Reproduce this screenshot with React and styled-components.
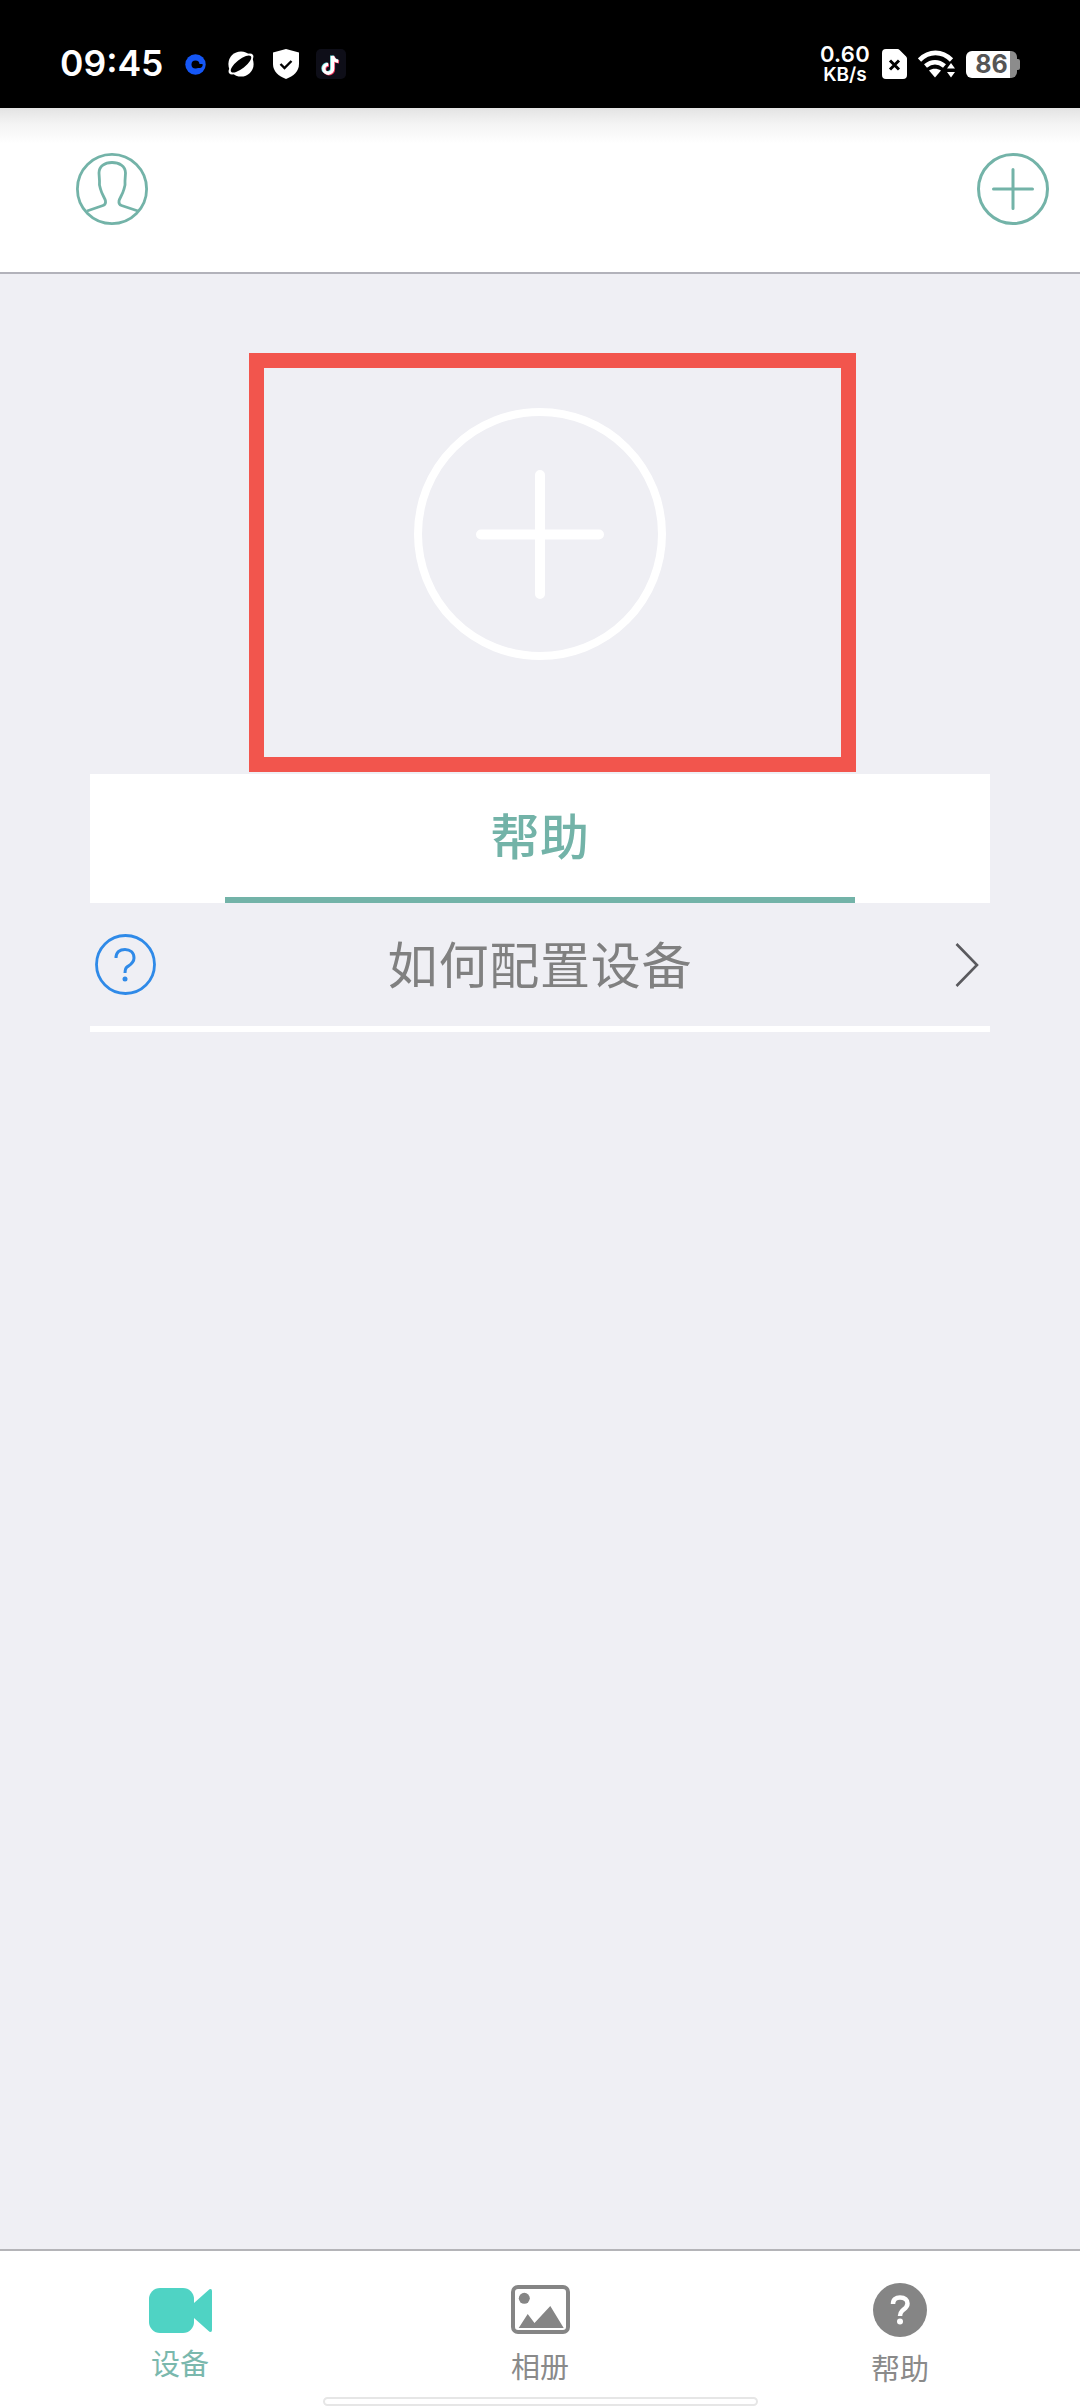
import React from 'react';
import styled, { createGlobalStyle } from 'styled-components';

const teal = '#73b3a8';
const cjk = '"Noto Sans CJK SC", "Noto Sans", sans-serif';

const GlobalStyle = createGlobalStyle`
  html, body {
    margin: 0;
    padding: 0;
    background: #efeff4;
  }
  * {
    box-sizing: border-box;
  }
`;

const Page = styled.div`
  width: 1080px;
  height: 2408px;
  display: flex;
  flex-direction: column;
  overflow: hidden;
  background: #efeff4;
  font-family: ${cjk};
`;

const StatusBar = styled.div`
  height: 108px;
  flex: none;
  display: flex;
  align-items: center;
  justify-content: space-between;
  padding: 20px 60px 0 60px;
  background: #000;
  color: #fff;
`;

const StatusGroup = styled.div`
  display: flex;
  align-items: center;
`;

const Time = styled.span`
  width: 103px;
  font: 600 35.5px/1 Inter, sans-serif;
  margin-right: 22px;
  white-space: nowrap;
`;

const StatusIcon = styled.svg`
  display: block;
  flex: none;
  margin-right: ${props => props.$gap || 0}px;
`;

const Speed = styled.div`
  display: flex;
  flex-direction: column;
  align-items: center;
  gap: 1px;
  margin-right: 12px;
  font-family: Inter, sans-serif;
  font-weight: 600;
`;

const SpeedValue = styled.span`
  font-size: 22px;
  line-height: 19px;
  letter-spacing: 0.3px;
`;

const SpeedUnit = styled.span`
  font-size: 19px;
  line-height: 19px;
`;

const Battery = styled.div`
  position: relative;
  width: 51px;
  height: 27px;
  margin-right: 3px;
  border-radius: 6px;
  display: flex;
  align-items: center;
  justify-content: center;
  background: linear-gradient(90deg, #fff 0 86%, #8c8c8c 86% 100%);
  color: #555;
  font: 700 25px/1 Inter, sans-serif;

  &::after {
    content: '';
    position: absolute;
    right: -3px;
    top: 8px;
    width: 3px;
    height: 11px;
    border-radius: 0 2px 2px 0;
    background: #8c8c8c;
  }
`;

const Header = styled.header`
  height: 166px;
  flex: none;
  display: flex;
  align-items: center;
  justify-content: space-between;
  padding: 0 31px 2px 76px;
  background: linear-gradient(180deg, #e3e3e3 0, #f4f4f4 16px, #fff 36px);
  border-bottom: 2px solid #b2b2ba;
`;

const HeaderIcon = styled.svg`
  display: block;
`;

const Main = styled.main`
  flex: 1;
  width: 900px;
  margin: 0 auto;
  padding-top: 79px;
  display: flex;
  flex-direction: column;
`;

const AddBox = styled.div`
  width: 607px;
  height: 419px;
  margin-left: 159px;
  padding: 40px 25px 0 0;
  border: 15px solid #f2554d;
  display: flex;
  justify-content: center;
  align-items: flex-start;
`;

const HelpCard = styled.div`
  height: 129px;
  margin-top: 2px;
  display: flex;
  flex-direction: column;
  background: #fff;
`;

const HelpTitle = styled.div`
  flex: 1;
  display: flex;
  align-items: center;
  justify-content: center;
  padding-bottom: 4px;
  color: ${teal};
  font-size: 49px;
  font-weight: 500;
  letter-spacing: 0.5px;
  line-height: 1;
`;

const HelpUnderline = styled.div`
  width: 630px;
  height: 6px;
  margin-left: 135px;
  background: ${teal};
`;

const HelpRow = styled.div`
  height: 123px;
  display: grid;
  grid-template-columns: 1fr auto 1fr;
  align-items: center;
  padding: 0 5px;
`;

const HelpRowText = styled.span`
  padding-bottom: 5px;
  color: #808080;
  font-size: 50px;
  letter-spacing: 0.8px;
  line-height: 1;
`;

const RowIcon = styled.svg`
  display: block;
  justify-self: ${props => props.$end ? 'end' : 'start'};
  margin-right: ${props => props.$end ? 6 : 0}px;
`;

const Divider = styled.div`
  height: 6px;
  background: #fff;
`;

const TabBar = styled.nav`
  height: 159px;
  flex: none;
  display: flex;
  flex-direction: column;
  align-items: center;
  background: #fff;
  border-top: 2px solid #b4b4b8;
`;

const Tabs = styled.div`
  width: 100%;
  height: 146px;
  display: grid;
  grid-template-columns: repeat(3, 1fr);
`;

const Tab = styled.div`
  display: flex;
  flex-direction: column;
  align-items: center;
  padding-top: ${props => props.$top}px;
`;

const TabIcon = styled.svg`
  display: block;
  flex: none;
`;

const TabLabel = styled.span`
  margin-top: ${props => props.$gap}px;
  color: ${props => props.$active ? '#7ab8ad' : '#8a8a8a'};
  font-size: 29px;
  line-height: 30px;
`;

const HomeIndicator = styled.div`
  width: 435px;
  height: 9px;
  border: 2px solid #e6e6e6;
  border-radius: 5px;
  background: #fff;
`;

const CoinIcon = () => (
  <StatusIcon $gap={20} width="21" height="21" viewBox="0 0 21 21">
    <circle cx="10.5" cy="10.5" r="10.2" fill="#1557f6" />
    <circle cx="10.5" cy="10.5" r="4" fill="#000" />
    <path d="M11 10h6.500a3 3 0 0 1-3 4H11z" fill="#000" />
  </StatusIcon>
);

const PlanetIcon = () => (
  <StatusIcon $gap={17} width="30" height="26" viewBox="0 0 30 26">
    <circle cx="15" cy="13" r="12.6" fill="#fff" />
    <ellipse cx="15" cy="13" rx="15" ry="6" transform="rotate(-38 15 13)" fill="#fff" />
    <ellipse cx="15" cy="13" rx="12.5" ry="4.6" transform="rotate(-38 15 13)" fill="#000" />
  </StatusIcon>
);

const ShieldIcon = () => (
  <StatusIcon $gap={17} width="26" height="30" viewBox="0 0 26 30">
    <path d="M13 0l13 3.500V15c0 7.500-5.500 12-13 15C5.500 27 0 22.500 0 15V3.500z" fill="#fff" />
    <path d="M7.500 15l4 4 7-7" fill="none" stroke="#000" strokeWidth="2.400" />
  </StatusIcon>
);

const TikTokIcon = () => (
  <StatusIcon width="30" height="30" viewBox="0 0 30 30">
    <rect width="30" height="30" rx="5" fill="#0e0e18" />
    <g fill="none" strokeWidth="3.400">
      <path d="M15.800 6.500v12.800a4.400 4.400 0 1 1-4.400-4.400M15.800 6.500c.5 3 2.800 5 5.700 5.200" stroke="#6fe3e6" />
      <path d="M17.400 7.700v12.800a4.400 4.400 0 1 1-4.400-4.400M17.400 7.700c.5 3 2.800 5 5.700 5.200" stroke="#f0345a" />
      <path d="M16.600 7v12.800a4.400 4.400 0 1 1-4.400-4.400M16.600 7c.5 3 2.800 5 5.700 5.200" stroke="#fff" />
    </g>
  </StatusIcon>
);

const SimIcon = () => (
  <StatusIcon $gap={11} width="25" height="30" viewBox="0 0 25 30">
    <path d="M4 0h11.500a3 3 0 0 1 2.100.9l6.500 6.500a3 3 0 0 1 .9 2.100V26a4 4 0 0 1-4 4H4a4 4 0 0 1-4-4V4a4 4 0 0 1 4-4z" fill="#fff" />
    <path d="M8 11.500l9 9M17 11.500l-9 9" stroke="#000" strokeWidth="3" />
  </StatusIcon>
);

const WifiIcon = () => (
  <StatusIcon $gap={11} width="37" height="28" viewBox="0 0 37 28">
    <g fill="none" stroke="#fff" strokeWidth="4.600">
      <path d="M1.500 10C11 .5 24 .5 33.500 10" />
      <path d="M7.500 16c6-5 13-5 19 0" />
    </g>
    <path d="M11 20.500c3.500-2.500 8-2.500 12 0l-6 7z" fill="#fff" />
    <path d="M33 13l4 5.500h-8zM33 27.500l-4-5.500h8z" fill="#fff" />
  </StatusIcon>
);

const ProfileIcon = () => (
  <HeaderIcon width="72" height="72" viewBox="0 0 72 72" fill="none" stroke={teal} strokeWidth="2.800">
    <circle cx="36" cy="36" r="34.600" />
    <path d="M11 58L27 52.500Q30 51.500 29.500 48C29 45 26 42 24.500 36C23.500 33 23 31 23.500 28L23 20C23 13 29 9.500 36 9.500C43 9.500 49.500 13 49.500 20L49 28C49.500 31 49 33 48 36C46.500 42 43.500 45 43 48Q42.500 51.500 45.500 52.500L62 58" />
  </HeaderIcon>
);

const AddIcon = () => (
  <HeaderIcon width="72" height="72" viewBox="0 0 72 72" fill="none" stroke={teal} strokeWidth="3">
    <circle cx="36" cy="36" r="34.500" />
    <path d="M16.500 36h39M36 16.500v39" strokeLinecap="round" />
  </HeaderIcon>
);

const BigAddIcon = () => (
  <svg width="252" height="252" viewBox="0 0 252 252" fill="none" stroke="#fff" style={{ display: 'block' }}>
    <circle cx="126" cy="126" r="122" strokeWidth="8" />
    <path d="M67 126.500h118M126 67v119" strokeWidth="10" strokeLinecap="round" />
  </svg>
);

const QuestionIcon = () => (
  <RowIcon width="61" height="61" viewBox="0 0 61 61" fill="none" stroke="#2f8ae8">
    <circle cx="30.500" cy="30.500" r="29" strokeWidth="2.800" />
    <path d="M21 24C21 18 25 15.500 30 15.500C35 15.500 39 18.500 39 24C39 29 35 31 32 33C30.500 34 30 36 30 39" strokeWidth="3" />
    <circle cx="30" cy="45" r="2.500" fill="#2f8ae8" stroke="none" />
  </RowIcon>
);

const ChevronIcon = () => (
  <RowIcon $end width="24" height="44" viewBox="0 0 24 44" fill="none" stroke="#5a5a5e" strokeWidth="2.600">
    <path d="M1.500 1L22 22L1.500 43" />
  </RowIcon>
);

const VideoIcon = () => (
  <TabIcon width="63" height="45" viewBox="0 0 63 45" fill="#4fd3c4">
    <rect width="45" height="45" rx="11" />
    <path d="M45 15L60.500 1.200Q63 .5 63 3V42Q63 44.500 60.500 43.800L45 30z" />
  </TabIcon>
);

const GalleryIcon = () => (
  <TabIcon width="59" height="49" viewBox="0 0 59 49" fill="#858585">
    <rect x="2" y="2" width="55" height="45" rx="5" fill="none" stroke="#858585" strokeWidth="4" />
    <circle cx="13.300" cy="13.300" r="5.500" />
    <path d="M7.700 43L16.700 29L23.500 38L39.300 21L52.700 43z" />
  </TabIcon>
);

const HelpFilledIcon = () => (
  <TabIcon width="54" height="54" viewBox="0 0 54 54">
    <circle cx="27" cy="27" r="27" fill="#858585" />
    <path d="M20 21C20 16.500 23 14.500 27 14.500C32 14.500 34.500 17 34.500 20.500C34.500 24.500 31 26 29 28C27.500 29.500 27 30.500 27 33" fill="none" stroke="#fff" strokeWidth="4.500" />
    <circle cx="27" cy="38.500" r="3" fill="#fff" />
  </TabIcon>
);

export default function App() {
  return (
    <Page>
      <GlobalStyle />
      <StatusBar>
        <StatusGroup>
          <Time>09:45</Time>
          <CoinIcon />
          <PlanetIcon />
          <ShieldIcon />
          <TikTokIcon />
        </StatusGroup>
        <StatusGroup>
          <Speed>
            <SpeedValue>0.60</SpeedValue>
            <SpeedUnit>KB/s</SpeedUnit>
          </Speed>
          <SimIcon />
          <WifiIcon />
          <Battery>86</Battery>
        </StatusGroup>
      </StatusBar>
      <Header>
        <ProfileIcon />
        <AddIcon />
      </Header>
      <Main>
        <AddBox>
          <BigAddIcon />
        </AddBox>
        <HelpCard>
          <HelpTitle>帮助</HelpTitle>
          <HelpUnderline />
        </HelpCard>
        <HelpRow>
          <QuestionIcon />
          <HelpRowText>如何配置设备</HelpRowText>
          <ChevronIcon />
        </HelpRow>
        <Divider />
      </Main>
      <TabBar>
        <Tabs>
          <Tab $top={37}>
            <VideoIcon />
            <TabLabel $active $gap={14}>设备</TabLabel>
          </Tab>
          <Tab $top={34}>
            <GalleryIcon />
            <TabLabel $gap={16}>相册</TabLabel>
          </Tab>
          <Tab $top={32}>
            <HelpFilledIcon />
            <TabLabel $gap={15}>帮助</TabLabel>
          </Tab>
        </Tabs>
        <HomeIndicator />
      </TabBar>
    </Page>
  );
}
